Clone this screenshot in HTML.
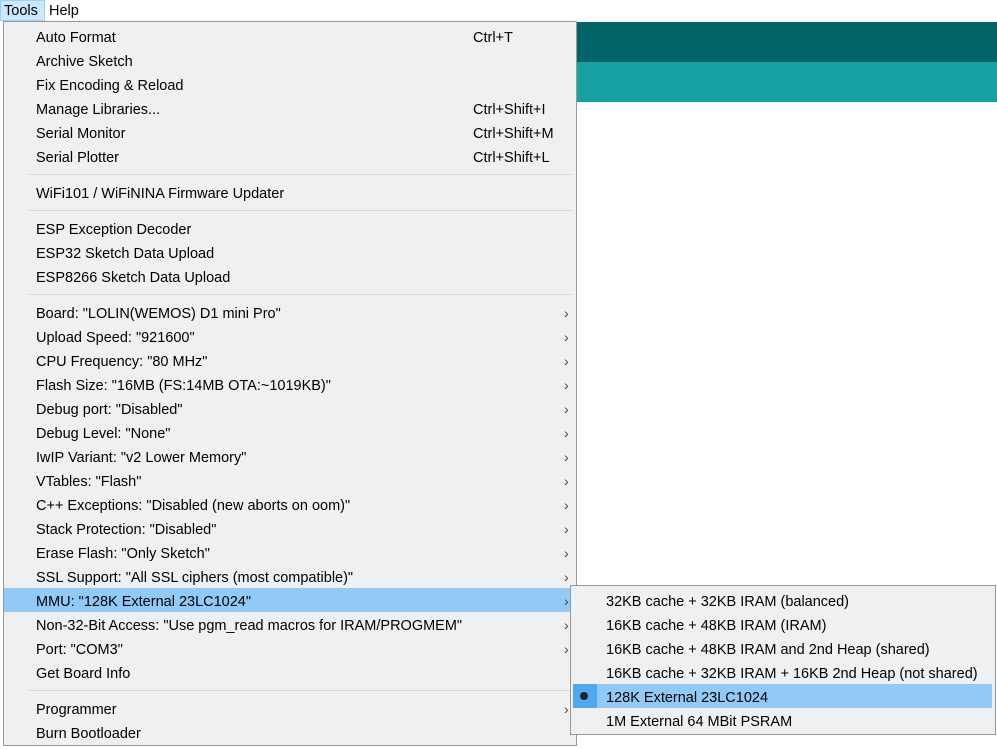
<!DOCTYPE html><html><head><style>
body{margin:0;width:997px;height:749px;background:#fff;position:relative;overflow:hidden;font-family:"Liberation Sans",sans-serif;font-size:14.5px;color:#000}
.a{position:absolute}
.t{position:absolute;white-space:nowrap;line-height:24px}
.sep{position:absolute;height:1px;background:#d7d7d7}
.ar{position:absolute;color:#444;font-size:14px;line-height:24px}
</style></head><body>
<div class="a" style="left:0;top:0;width:45px;height:21px;background:#cce8ff;border:1px solid #99d1ff;box-sizing:border-box"></div>
<div class="t" style="left:4px;top:-1px">Tools</div>
<div class="t" style="left:49px;top:-1px">Help</div>
<div class="a" style="left:577px;top:22px;width:420px;height:40px;background:#006468"></div>
<div class="a" style="left:577px;top:62px;width:420px;height:40px;background:#17a1a5"></div>
<div class="a" style="left:3px;top:21px;width:574px;height:725px;background:#f0f0f0;border:1px solid #979797;box-sizing:border-box"></div>
<div class="a" style="left:4px;top:588px;width:572px;height:24px;background:#91c9f7"></div>
<div id="m"></div>
<div class="a" style="left:570px;top:585px;width:426px;height:150px;background:#f0f0f0;border:1px solid #979797;box-sizing:border-box"></div>
<div class="a" style="left:573px;top:684px;width:419px;height:24px;background:#91c9f7"></div>
<div class="a" style="left:573px;top:684px;width:24px;height:24px;background:#4fa8f0"></div>
<div class="a" style="left:580px;top:692px;width:8px;height:8px;border-radius:50%;background:#222"></div>
<div class="t" style="left:606px;top:590px">32KB cache + 32KB IRAM (balanced)</div>
<div class="t" style="left:606px;top:614px">16KB cache + 48KB IRAM (IRAM)</div>
<div class="t" style="left:606px;top:638px">16KB cache + 48KB IRAM and 2nd Heap (shared)</div>
<div class="t" style="left:606px;top:662px">16KB cache + 32KB IRAM + 16KB 2nd Heap (not shared)</div>
<div class="t" style="left:606px;top:686px">128K External 23LC1024</div>
<div class="t" style="left:606px;top:710px">1M External 64 MBit PSRAM</div>
<script>
var items=[["Auto Format","Ctrl+T"],["Archive Sketch"],["Fix Encoding & Reload"],["Manage Libraries...","Ctrl+Shift+I"],["Serial Monitor","Ctrl+Shift+M"],["Serial Plotter","Ctrl+Shift+L"],0,["WiFi101 / WiFiNINA Firmware Updater"],0,["ESP Exception Decoder"],["ESP32 Sketch Data Upload"],["ESP8266 Sketch Data Upload"],0,
['Board: "LOLIN(WEMOS) D1 mini Pro"',1],['Upload Speed: "921600"',1],['CPU Frequency: "80 MHz"',1],['Flash Size: "16MB (FS:14MB OTA:~1019KB)"',1],['Debug port: "Disabled"',1],['Debug Level: "None"',1],['IwIP Variant: "v2 Lower Memory"',1],['VTables: "Flash"',1],['C++ Exceptions: "Disabled (new aborts on oom)"',1],['Stack Protection: "Disabled"',1],['Erase Flash: "Only Sketch"',1],['SSL Support: "All SSL ciphers (most compatible)"',1],['MMU: "128K External 23LC1024"',1],['Non-32-Bit Access: "Use pgm_read macros for IRAM/PROGMEM"',1],['Port: "COM3"',1],["Get Board Info"],0,["Programmer",1],["Burn Bootloader"]];
var y=25,h="";
items.forEach(function(it){
 if(!it){h+='<div class="sep" style="left:28px;top:'+(y+5)+'px;width:545px"></div>';y+=12;return;}
 h+='<div class="t" style="left:36px;top:'+(y+1)+'px">'+it[0].replace(/&/g,"&amp;")+'</div>';
 if(it[1]===1)h+='<div class="ar" style="left:564px;top:'+y+'px">&#x203A;</div>';
 else if(it[1])h+='<div class="t" style="left:473px;top:'+(y+1)+'px">'+it[1]+'</div>';
 y+=24;});
document.getElementById("m").outerHTML=h;
</script>
</body></html>
